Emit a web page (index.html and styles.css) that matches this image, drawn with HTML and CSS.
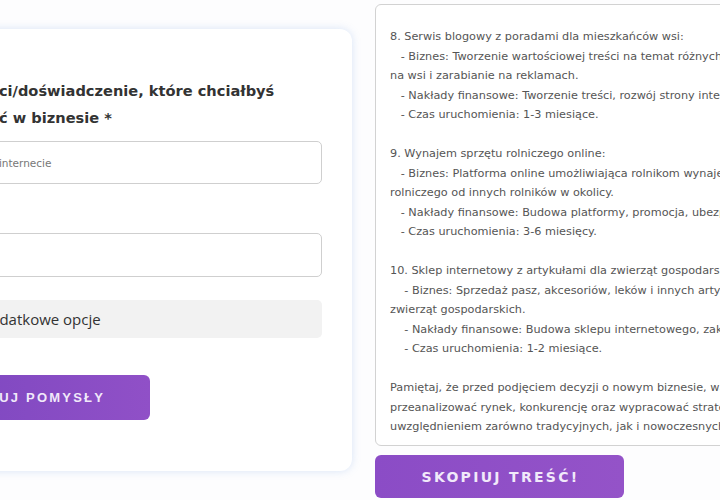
FILE: index.html
```html
<!DOCTYPE html>
<html lang="pl">
<head>
<meta charset="utf-8">
<title>Generator pomysłów</title>
<link rel="stylesheet" href="styles.css">
</head>
<body>
<div class="page">
  <form class="card">
    <label class="field-label" for="skills">Umiejętności/doświadczenie, które chciałbyś wykorzystać w biznesie *</label>
    <input class="field" id="skills" type="text" placeholder="np. reklama w internecie">
    <input class="field field-second" type="text">
    <div class="extra"><span class="extra-arrow">▸</span>Pokaż dodatkowe opcje</div>
    <button class="btn-generate" type="button">GENERUJ POMYSŁY</button>
  </form>
  <div class="result-col">
    <div class="result">
<pre class="result-text">8. Serwis blogowy z poradami dla mieszkańców wsi:
   - Biznes: Tworzenie wartościowej treści na temat różnych aspektów życia
na wsi i zarabianie na reklamach.
   - Nakłady finansowe: Tworzenie treści, rozwój strony internetowej, promocja.
   - Czas uruchomienia: 1-3 miesiące.

9. Wynajem sprzętu rolniczego online:
   - Biznes: Platforma online umożliwiająca rolnikom wynajem sprzętu
rolniczego od innych rolników w okolicy.
   - Nakłady finansowe: Budowa platformy, promocja, ubezpieczenie sprzętu.
   - Czas uruchomienia: 3-6 miesięcy.

10. Sklep internetowy z artykułami dla zwierząt gospodarskich:
    - Biznes: Sprzedaż pasz, akcesoriów, leków i innych artykułów dla
zwierząt gospodarskich.
    - Nakłady finansowe: Budowa sklepu internetowego, zakup towaru, promocja.
    - Czas uruchomienia: 1-2 miesiące.

Pamiętaj, że przed podjęciem decyzji o nowym biznesie, warto dokładnie
przeanalizować rynek, konkurencję oraz wypracować strategię marketingową z
uwzględnieniem zarówno tradycyjnych, jak i nowoczesnych metod.</pre>
    </div>
    <button class="btn-copy" type="button">SKOPIUJ TREŚĆ!</button>
  </div>
</div>
</body>
</html>
```
FILE: styles.css
```css
html, body {
  margin: 0;
  padding: 0;
  overflow: hidden;
  background: #fdfdfe;
  width: 720px;
  height: 500px;
}

.page {
  display: flex;
  align-items: flex-start;
  gap: 23px;
  margin-left: -124px;
  width: 1100px;
}

.card {
  box-sizing: border-box;
  width: 476px;
  flex: none;
  margin-top: 29px;
  padding: 48px 30px 51px 30px;
  background: #ffffff;
  border-radius: 12px;
  box-shadow: 0 0 8px rgba(120, 160, 225, 0.28);
  display: flex;
  flex-direction: column;
}

.field-label {
  font-family: "DejaVu Sans", Verdana, sans-serif;
  font-weight: bold;
  font-size: 14.6px;
  line-height: 27px;
  color: #333333;
  margin-bottom: 10px;
}

.field {
  box-sizing: border-box;
  height: 43px;
  border: 1px solid #cfcfcf;
  border-radius: 5px;
  padding: 0 10px 0 14px;
  font-family: "DejaVu Sans", Verdana, sans-serif;
  font-size: 10.5px;
  color: #333;
  background: #fff;
  outline: none;
}

.field::placeholder {
  color: #777777;
}

.field-second {
  margin-top: 49px;
  height: 44px;
}

.extra {
  margin-top: 23px;
  height: 38px;
  display: flex;
  align-items: center;
  padding-left: 12px;
  background: #f2f2f2;
  border-radius: 5px;
  font-family: "Open Sans", sans-serif;
  font-size: 15px;
  color: #333333;
}

.extra-arrow {
  display: inline-block;
  width: 18px;
  font-size: 12px;
}

.btn-generate {
  margin-top: 37px;
  align-self: flex-start;
  height: 45px;
  border: none;
  border-radius: 6px;
  background: linear-gradient(90deg, #7a46bf, #9050c7);
  color: #f1e9fa;
  font-family: "Liberation Sans", Arial, sans-serif;
  font-weight: bold;
  font-size: 13px;
  letter-spacing: 2.2px;
  padding: 0 45px 0 36px;
}

.result-col {
  margin-top: 4px;
  flex: none;
  width: 560px;
  display: flex;
  flex-direction: column;
  gap: 9px;
}

.result {
  box-sizing: border-box;
  height: 442px;
  border: 1px solid #d2d2d2;
  border-radius: 6px;
  background: #ffffff;
  padding: 22px 14px 0 14px;
  overflow: hidden;
}

.result-text {
  margin: 0;
  white-space: pre;
  font-family: "DejaVu Sans", Verdana, sans-serif;
  font-size: 11.25px;
  line-height: 19.5px;
  color: #555555;
}

.btn-copy {
  box-sizing: border-box;
  width: 249px;
  height: 43px;
  border: none;
  border-radius: 6px;
  background: linear-gradient(90deg, #8b4cc6, #9453c8);
  color: #f1e9fa;
  font-family: "DejaVu Sans", Verdana, sans-serif;
  font-weight: bold;
  font-size: 14px;
  letter-spacing: 2.3px;
  padding: 0 0 0 2px;
}
```
